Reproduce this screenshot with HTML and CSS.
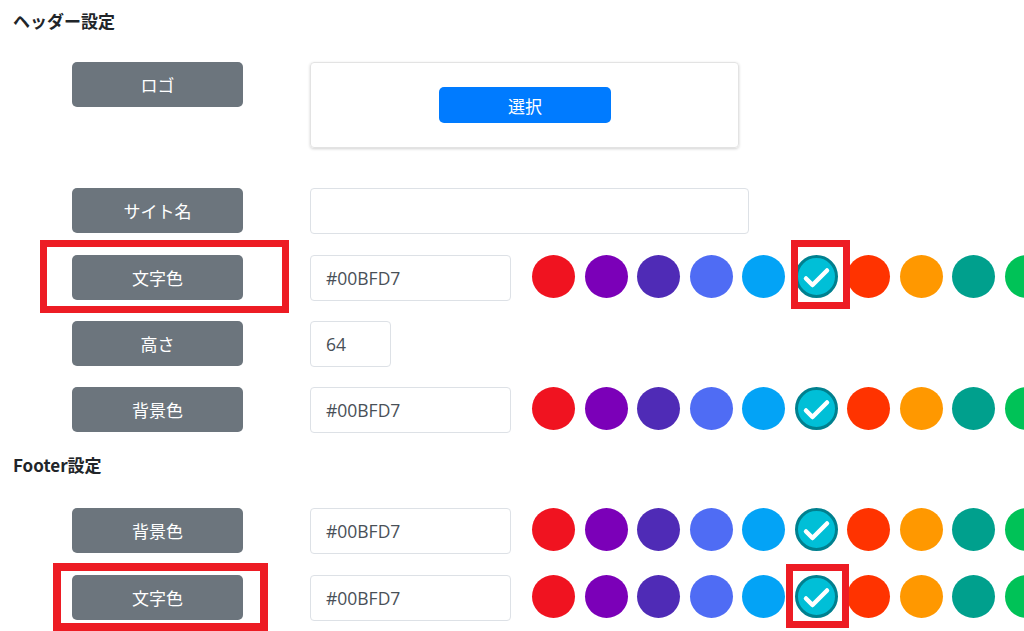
FILE: index.html
```html
<!DOCTYPE html>
<html lang="ja">
<head>
<meta charset="utf-8">
<link rel="stylesheet" href="styles.css">
</head>
<body>
<div class="page">
  <h2 class="section-title">ヘッダー設定</h2>
  <div class="rows rows-header">
    <div class="row row-logo">
      <div class="label">ロゴ</div>
      <div class="logo-box"><button class="btn-select">選択</button></div>
    </div>
    <div class="row">
      <div class="label">サイト名</div>
      <div class="input input-wide"></div>
    </div>
    <div class="row">
      <div class="label">文字色</div>
      <div class="input input-color">#00BFD7</div>
      <div class="swatches">
        <span class="sw c1"></span><span class="sw c2"></span><span class="sw c3"></span><span class="sw c4"></span><span class="sw c5"></span>
        <span class="sw sel"><svg viewBox="0 0 43 43"><path d="M11 23.5 L17.5 30 L32 15.5"/></svg></span>
        <span class="sw c7"></span><span class="sw c8"></span><span class="sw c9"></span><span class="sw c10"></span>
      </div>
    </div>
    <div class="row">
      <div class="label">高さ</div>
      <div class="input input-num">64</div>
    </div>
    <div class="row">
      <div class="label">背景色</div>
      <div class="input input-color">#00BFD7</div>
      <div class="swatches">
        <span class="sw c1"></span><span class="sw c2"></span><span class="sw c3"></span><span class="sw c4"></span><span class="sw c5"></span>
        <span class="sw sel"><svg viewBox="0 0 43 43"><path d="M11 23.5 L17.5 30 L32 15.5"/></svg></span>
        <span class="sw c7"></span><span class="sw c8"></span><span class="sw c9"></span><span class="sw c10"></span>
      </div>
    </div>
  </div>

  <h2 class="section-title section-footer">Footer設定</h2>
  <div class="rows rows-footer">
    <div class="row">
      <div class="label">背景色</div>
      <div class="input input-color">#00BFD7</div>
      <div class="swatches">
        <span class="sw c1"></span><span class="sw c2"></span><span class="sw c3"></span><span class="sw c4"></span><span class="sw c5"></span>
        <span class="sw sel"><svg viewBox="0 0 43 43"><path d="M11 23.5 L17.5 30 L32 15.5"/></svg></span>
        <span class="sw c7"></span><span class="sw c8"></span><span class="sw c9"></span><span class="sw c10"></span>
      </div>
    </div>
    <div class="row">
      <div class="label">文字色</div>
      <div class="input input-color">#00BFD7</div>
      <div class="swatches">
        <span class="sw c1"></span><span class="sw c2"></span><span class="sw c3"></span><span class="sw c4"></span><span class="sw c5"></span>
        <span class="sw sel"><svg viewBox="0 0 43 43"><path d="M11 23.5 L17.5 30 L32 15.5"/></svg></span>
        <span class="sw c7"></span><span class="sw c8"></span><span class="sw c9"></span><span class="sw c10"></span>
      </div>
    </div>
  </div>

  <div class="mark mark-1"></div>
  <div class="mark mark-2"></div>
  <div class="mark mark-3"></div>
  <div class="mark mark-4"></div>
</div>
</body>
</html>
```

FILE: styles.css
```css
* { box-sizing: border-box; }
html, body { margin: 0; padding: 0; background: #fff; }
body {
  font-family: "Noto Sans CJK JP", "Open Sans", sans-serif;
  color: #212529;
  overflow: hidden;
  width: 1024px;
  height: 631px;
}
.page { position: relative; width: 1024px; height: 631px; overflow: hidden; }

.section-title {
  margin: 0;
  padding: 9px 0 0 13px;
  font-size: 17px;
  line-height: 24px;
  font-weight: 700;
  color: #212529;
}
.section-footer { padding-top: 21px; }

.rows {
  display: flex;
  flex-direction: column;
  gap: 21.33px;
  padding-left: 72px;
}
.rows-header { margin-top: 29px; }
.rows-footer { margin-top: 31px; }

.row {
  display: flex;
  align-items: flex-start;
  height: 45px;
  flex-wrap: nowrap;
}
.row-logo { height: 86px; margin-bottom: 19px; }

.label {
  flex: 0 0 171px;
  height: 45px;
  background: #6c757d;
  border-radius: 5px;
  color: #fff;
  font-size: 17px;
  line-height: 45px;
  text-align: center;
  margin-right: 67px;
}

.logo-box {
  width: 429px;
  height: 86px;
  border: 1px solid #e3e3e3;
  border-radius: 4px;
  box-shadow: 0 1px 3px rgba(0,0,0,0.18);
  display: flex;
  align-items: center;
  justify-content: center;
}
.btn-select {
  width: 172px;
  height: 36px;
  border: 0;
  border-radius: 5px;
  background: #007bff;
  color: #fff;
  font-family: "Noto Sans CJK JP", sans-serif;
  font-size: 17px;
  padding: 0;
  margin-left: 1px;
}

.input {
  height: 46px;
  border: 1px solid #dde1e6;
  border-radius: 4px;
  font-family: "Open Sans", "Noto Sans CJK JP", sans-serif;
  font-size: 17.5px;
  color: #495057;
  line-height: 44px;
  padding-left: 15px;
  flex-shrink: 0;
}
.input-wide { width: 439px; }
.input-color { width: 201px; }
.input-num { width: 81px; }

.swatches {
  display: flex;
  gap: 9.5px;
  margin-left: 21px;
  flex-shrink: 0;
}
.sw {
  flex: 0 0 43px;
  width: 43px;
  height: 43px;
  border-radius: 50%;
  display: block;
}
.c1 { background: #f01320; }
.c2 { background: #7b00b8; }
.c3 { background: #4f2bb6; }
.c4 { background: #4f6cf4; }
.c5 { background: #03a3f6; }
.c7 { background: #ff3300; }
.c8 { background: #ff9800; }
.c9 { background: #00a08d; }
.c10 { background: #00c257; }
.sel {
  background: #00bfd7;
  border: 3px solid #00808f;
  position: relative;
}
.sel svg {
  position: absolute;
  left: -3px;
  top: -3px;
  width: 43px;
  height: 43px;
}
.sel path {
  fill: none;
  stroke: #fff;
  stroke-width: 4.5;
  stroke-linecap: round;
  stroke-linejoin: round;
}

.mark {
  position: absolute;
  border: 7px solid #ed1c24;
}
.mark-1 { left: 40px; top: 240px; width: 249px; height: 73px; }
.mark-2 { left: 791px; top: 240px; width: 59px; height: 69px; }
.mark-3 { left: 53px; top: 563px; width: 215px; height: 68px; border-width: 8px; }
.mark-4 { left: 786px; top: 564px; width: 63px; height: 64px; }
```
